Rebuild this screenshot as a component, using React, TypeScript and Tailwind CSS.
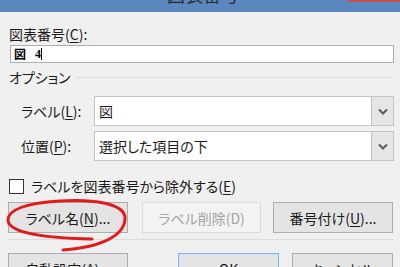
import React from "react";

const font = "font-['Noto_Sans_CJK_JP','Noto_Sans',sans-serif] [font-feature-settings:'palt']";

function Btn({ children, w, disabled, primary }: { children: React.ReactNode; w: string; disabled?: boolean; primary?: boolean }) {
  const base = "flex items-center justify-center h-[31px] text-[14px] leading-none border";
  let cls = "bg-[#e4e4e4] border-[#adadad] text-[#1a1a1a]";
  if (disabled) cls = "bg-[#f3f3f3] border-[#dadada] text-[#a3a3a3]";
  if (primary) cls = "bg-[#e4e4e4] border-[#7eb4ea] text-[#1a1a1a] shadow-[inset_0_0_0_1px_#cfe4f8]";
  return <div className={`${base} ${cls} ${w}`}>{children}</div>;
}

function Select({ text }: { text: string }) {
  return (
    <div className="flex w-[300px] h-[30px] border border-[#c4c4c4] bg-white">
      <div className="flex-1 flex items-center pl-[4px] text-[14px] text-[#1a1a1a]">{text}</div>
      <div className="w-[22px] flex items-center justify-center bg-[#e6e6e6] border-l border-[#c4c4c4]">
        <svg width="10" height="7" viewBox="0 0 10 7">
          <path d="M1 1.5 L5 5.5 L9 1.5" fill="none" stroke="#5a5a5a" strokeWidth="2" />
        </svg>
      </div>
    </div>
  );
}

export default function App() {
  return (
    <div className={`relative w-[400px] h-[267px] overflow-hidden bg-[#f0f0f0] ${font}`}>
      <div className="relative h-[12px] bg-[#5b87bf] flex justify-center items-end overflow-hidden pb-[8px]">
        <span className="text-[18px] leading-[20px] text-[#2a2a2a] pl-[6px]">図表番号</span>
        <div className="absolute top-0 right-0 w-[52px] h-[2px] bg-[#c75050]" />
      </div>

      <div className="pl-[9px] pr-[6px]">
        <div className="mt-[12px] h-[20px] text-[14px] leading-[20px] text-[#1a1a1a]">
          図表番号(<u className="underline-offset-2">C</u>):
        </div>
        <div className="mt-[1px] ml-[1px] w-[384px] h-[18px] bg-white border border-[#abadb3] flex items-center pl-[3px]">
          <span className="text-[12px] font-bold leading-none text-black">図</span>
          <span className="ml-[9px] text-[12px] font-bold leading-none text-black font-['Liberation_Serif',serif]">4</span>
          <span className="w-px h-[12px] bg-black" />
        </div>

        <div className="mt-[4px] flex items-center h-[20px]">
          <span className="text-[14px] leading-[20px] text-[#1a1a1a]">オプション</span>
          <div className="flex-1 ml-[5px] h-px bg-[#dcdcdc]" />
        </div>

        <div className="mt-[9px] flex items-center">
          <div className="w-[85px] pl-[12px] text-[14px] text-[#1a1a1a]">ラベル(<u className="underline-offset-2">L</u>):</div>
          <Select text="図" />
        </div>
        <div className="mt-[5px] flex items-center">
          <div className="w-[85px] pl-[12px] text-[14px] text-[#1a1a1a]">位置(<u className="underline-offset-2">P</u>):</div>
          <Select text="選択した項目の下" />
        </div>

        <div className="mt-[17px] flex items-center h-[16px]">
          <div className="w-[15px] h-[15px] bg-white border border-[#333]" />
          <span className="ml-[7px] text-[14px] leading-none text-[#1a1a1a]">ラベルを図表番号から除外する(<u className="underline-offset-2">E</u>)</span>
        </div>

        <div className="mt-[8px] flex w-[385px] -ml-px">
          <Btn w="w-[120px]">ラベル名(<u className="underline-offset-2">N</u>)...</Btn>
          <div className="ml-[14px]"><Btn w="w-[119px]" disabled>ラベル削除(D)</Btn></div>
          <div className="ml-[12px]"><Btn w="w-[120px]">番号付け(<u className="underline-offset-2">U</u>)...</Btn></div>
        </div>

        <div className="mt-[6px] h-px w-[385px] -ml-px bg-[#dcdcdc]" />

        <div className="mt-[13px] flex w-[385px] -ml-px items-start">
          <Btn w="w-[120px]">自動設定(<u className="underline-offset-2">A</u>)...</Btn>
          <div className="ml-[50px]"><Btn w="w-[101px]" primary>OK</Btn></div>
          <div className="ml-[13px]"><Btn w="w-[101px]">キャンセル</Btn></div>
        </div>
      </div>

      <svg className="absolute inset-0 pointer-events-none" width="400" height="267" viewBox="0 0 400 267">
        <path
          d="M 63 250 C 95 248, 124 238, 125 219 C 126 203, 92 199, 60 201 C 30 203, 8 208, 8 220 C 8 232, 40 238, 92 239"
          fill="none"
          stroke="#e3191c"
          strokeWidth="3"
          strokeLinecap="round"
        />
      </svg>
    </div>
  );
}
